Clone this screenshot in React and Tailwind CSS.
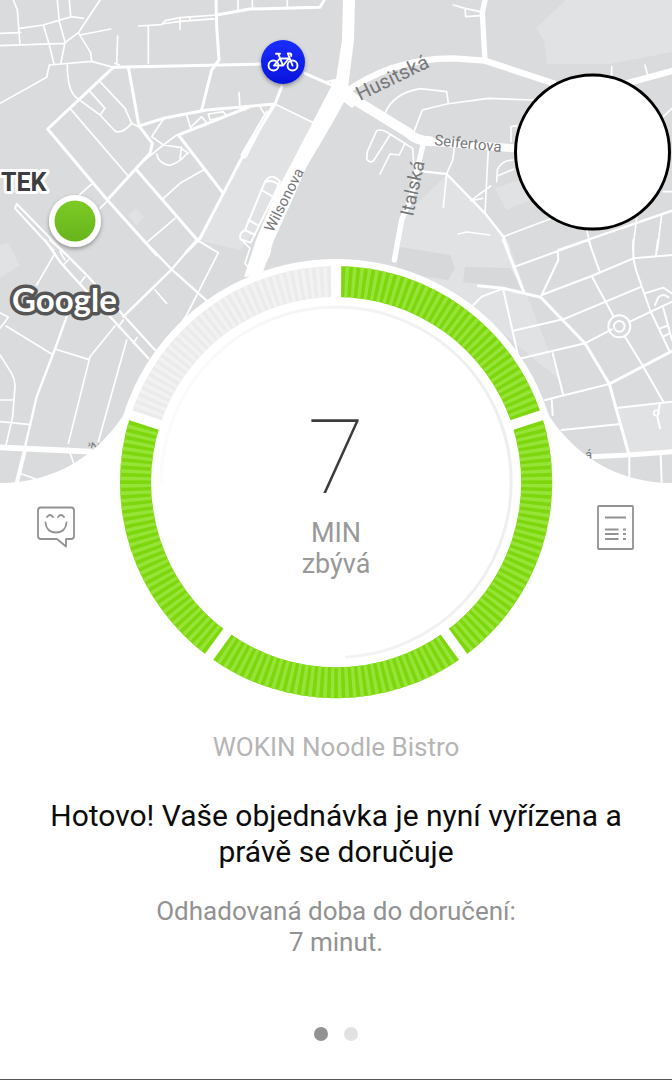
import React from "react";

function Roads() {
  return (
    <g fill="none" stroke="#fff" strokeLinejoin="round" strokeLinecap="round">
      <g transform="scale(0.33333)">
        <path
          strokeWidth="5"
          d="M0 100L62 98M0 137L195 130M40 0L52 30L60 135M60 85L130 75L215 50L250 55M172 0L178 65L195 125M208 0L212 50M300 0L235 98L195 128L182 192M130 75L148 135L162 192M240 105L332 87M235 98L272 158L275 183M148 195L275 184L340 202M148 195L140 232L0 310M202 195Q202 270 228 292L300 345L345 393Q365 404 395 370M353 108L350 190M345 190L358 195M300 245L375 325L395 370L415 380M268 272L315 325L300 345M210 325L382 525M445 78V190M415 78L485 74L495 62L540 53L650 45M485 72L540 64L650 56M540 52V88M570 50V62M714 0V30M757 0V25M862 0V22M490 358L455 410L490 435L540 442L565 460M560 345L572 385M572 382L605 350L620 368M625 342L670 335L680 348L630 360ZM717 278L720 325L735 330M825 312L940 368L995 265M780 320L792 340M470 462Q475 490 508 496Q535 492 562 460M545 442L540 475M530 405L490 435L410 500M610 510L540 550L490 595M525 655L440 728M240 583L280 548M590 718L640 750M300 625L325 600M980 245L1010 240"
        />
        <path
          strokeWidth="6"
          d="M800 335L724 465Q728 478 738 470L815 320M795 545Q815 515 840 545L820 590L752 728L722 718Q716 700 735 690ZM800 545Q815 538 835 553M785 570L815 588M745 660L775 676M735 690L765 705M45 625L50 612L60 622L185 750M45 625L160 750"
        />
        <path
          strokeWidth="9"
          d="M648 0L650 80L657 180L635 210L605 330M340 202L785 192M340 202L143 387L322 600L470 765M385 202L417 378L490 355L620 330L825 312M650 45L750 27L960 22L973 0M417 378L457 430L450 460L322 600M845 260L825 312L722 480L670 580L600 715L560 755M915 220L1005 260M535 405L670 580M408 508L590 718M750 320L535 405"
        />
      </g>

      <g transform="translate(330 0) scale(0.33333)">
        <path
          strokeWidth="5"
          d="M370 15L405 25L450 35M405 25L407 50L450 47M165 340Q190 280 270 266L350 275L355 310M250 400L277 330L350 312L475 295L610 300M150 522L180 462L208 465L225 430M180 405L130 483Q118 490 110 478L112 455L140 392Q155 385 180 402L248 445L252 500L285 515M373 445L368 480L350 522L340 622M475 445L465 640M422 602L482 558M422 602L458 595M385 702L410 696L480 705M500 545L502 510Q515 480 550 480M502 528L550 508M543 425V380L560 377M845 200V225M945 195L952 222M1000 350L1026 325M520 710L660 657M920 655L908 750M995 645L982 750M770 690L785 750M1000 575H1026"
        />
        <path
          strokeWidth="7"
          d="M285 515L350 522L465 640L520 710L535 750M685 750L1026 632"
        />
        <path strokeWidth="16" d="M465 0L457 40L465 182M280 430L240 600L215 660L193 780" />
        <path
          strokeWidth="19"
          d="M35 285Q180 175 370 175L465 182L670 250M890 250L1030 212"
        />
        <path strokeWidth="30" d="M30 272L235 398Q255 422 300 424" />
        <path strokeWidth="24" d="M280 424L570 446" />
      </g>

      <g transform="translate(0 240) scale(0.33333)">
        <path
          strokeWidth="5"
          d="M165 40L110 135M25 232L0 265M0 218L25 232M18 258L155 342M0 345L35 400Q46 420 45 440L38 530L18 615M0 480H42M0 545L92 554M165 327L265 358M345 258L270 350L205 610M205 625L222 672M380 300L295 605M590 0L655 38L560 225L515 290M465 150L500 190M370 230L515 88M65 702L105 716M195 60L180 35M190 75L205 60M240 130L255 110M355 260L370 240M400 310L412 292"
        />
        <path
          strokeWidth="7"
          d="M590 0L515 88L370 230M430 0L515 88L620 182M200 230L165 327L110 470L75 620M135 0L180 65L215 105L445 355M150 0L195 40L260 105L465 330"
        />
        <path strokeWidth="12" d="M75 630L50 730" />
        <path strokeWidth="17" d="M0 622L270 635" />
        <path strokeWidth="5" d="M725 0L750 25L735 70L770 110M800 0Q820 20 805 50L780 95" />
      </g>

      <g transform="translate(330 240) scale(0.33333)">
        <path
          strokeWidth="6"
          d="M555 80L775 0L808 92M635 165L685 60L683 35M635 165L785 108L910 55L1026 45M910 55V0M978 45L984 0M910 55L918 90L960 210L1018 333M785 108L850 228M705 236L935 140M550 272L705 236M520 150L565 350M430 195L455 170L520 145M575 355L765 310L845 268M668 340L700 466M645 480L838 432M665 480L668 525M695 570L865 553M865 503L1026 485M885 290L940 380L1000 485M900 245L1026 185M765 310L838 432M1000 205L1026 300M990 265L1010 258M1000 290L1018 280M945 160L1000 143L1026 160M975 195L985 172Q1000 158 1015 172M990 490L982 530L990 565M898 650V712M992 645L995 725"
        />
        <path
          strokeWidth="9"
          d="M520 0L582 158M445 137L520 145L632 172L765 310L838 432L895 638M838 432L1026 333"
        />
        <path strokeWidth="15" d="M780 650L895 645L1030 635" />
        <circle cx="868" cy="259" r="33" strokeWidth="6" />
        <circle cx="868" cy="259" r="16" strokeWidth="6" />
        <circle cx="979" cy="519" r="8" strokeWidth="5" />
      </g>

      <path
        fill="#fff"
        stroke="none"
        d="M343 0H355L354 40L348 88L362 98L352 108L344 102L333 122L306 168L290 205L274 240L262 275L244 277L256 240L277 190L290 166L313 122L332 85L330 80L336 79L342 40Z"
      />
    </g>
  );
}

function CityMap() {
  return (
    <svg viewBox="0 0 672 483" className="block h-auto w-full" role="img" aria-label="Mapa doručení">
      <defs>
        <linearGradient id="home" x1="0" y1="0" x2="0" y2="1">
          <stop offset="0" stopColor="#7dcb26" />
          <stop offset="1" stopColor="#67b41c" />
        </linearGradient>
        <linearGradient id="courier" x1="0" y1="0" x2="0" y2="1">
          <stop offset="0" stopColor="#1a2dff" />
          <stop offset="1" stopColor="#0415dc" />
        </linearGradient>
        <filter id="shadow" x="-30%" y="-30%" width="160%" height="160%">
          <feDropShadow dx="0" dy="2" stdDeviation="2" floodOpacity="0.35" />
        </filter>
      </defs>
      <rect width="672" height="483" fill="#dadbdd" />
      <g fill="#e1e2e4">
        <path d="M536 28L566 0H672V52L610 64L547 64L544 40Z" />
        <path d="M275 105L313 123L280 200L240 250L197 240L240 160Z" />
        <path d="M447 175L485 212L508 240L525 290L560 380L450 290L395 268L405 215Z" />
        <path d="M495 188L520 180L535 198L506 210ZM0 245L8 243L20 265L0 278ZM128 215L136 208L144 217L136 225Z" />
        <path d="M618 407L672 402V450L628 453Z" />
      </g>
      <path d="M400 247L450 255L455 268L448 280L395 272ZM465 267L510 268L524 290L463 282Z" fill="#d7d8da" />
      <Roads />

      <g fill="#77787b" fontFamily="Roboto, sans-serif">
        <text fontSize="20" transform="translate(360 101) rotate(-26)">Husitská</text>
        <text fontSize="15" transform="translate(434 145) rotate(6)">Seifertova</text>
        <text fontSize="19" transform="translate(413 217) rotate(-78)">Italská</text>
        <text fontSize="15" transform="translate(273 233) rotate(-63)">Wilsonova</text>
        <text fontSize="14" transform="translate(98 450) rotate(-78)">ž</text>
        <text fontSize="13" transform="translate(585 459)">á</text>
      </g>
      <text
        x="1"
        y="191"
        fontSize="25"
        fontWeight="700"
        fontFamily="Roboto, sans-serif"
        fill="#3c3d41"
        stroke="#fff"
        strokeWidth="6"
        strokeLinejoin="round"
        paintOrder="stroke"
      >
        TEK
      </text>

      <path
        d="M0 483C55 483 100 455 128 408A223 223 0 0 1 544 408C572 455 617 483 672 483Z"
        fill="#fff"
      />

      <g filter="url(#shadow)">
        <circle cx="75" cy="221" r="26" fill="#fff" />
      </g>
      <circle cx="75" cy="221" r="20.5" fill="url(#home)" />

      <circle cx="283" cy="62" r="22" fill="url(#courier)" filter="url(#shadow)" />
      <g fill="none" stroke="#fff" strokeWidth="1.9" strokeLinecap="round" strokeLinejoin="round">
        <circle cx="273.5" cy="65.5" r="5" />
        <circle cx="292.5" cy="65.5" r="5" />
        <path d="M276 53.8H280M278.3 54L283 65.5L289 58.5H279.8L274 65.5L283 65.5M292.5 65.5L287.8 53.5H290Q292 54 291 56" />
      </g>

      <text
        x="12"
        y="312"
        fontSize="33"
        fontWeight="700"
        fontFamily="Lato, sans-serif"
        fill="#fff"
        stroke="#555"
        strokeWidth="7"
        strokeLinejoin="round"
        paintOrder="stroke"
      >
        Google
      </text>

      <circle cx="592.5" cy="152" r="77" fill="#fff" stroke="#000" strokeWidth="3" />
    </svg>
  );
}

const INNER = 185;
const OUTER = 216;

function point(radius, degrees) {
  const a = (degrees * Math.PI) / 180;
  return `${(radius * Math.sin(a)).toFixed(2)} ${(-radius * Math.cos(a)).toFixed(2)}`;
}

function wedge(from, to) {
  return `M${point(OUTER, from)}A${OUTER} ${OUTER} 0 0 1 ${point(OUTER, to)}L${point(INNER, to)}A${INNER} ${INNER} 0 0 0 ${point(INNER, from)}Z`;
}

function stripes(start) {
  return Array.from({ length: 36 }, (_, i) => wedge(start + i * 2 + 0.5, start + i * 2 + 1.5)).join("");
}

const segments = [0, 72, 144, 216, 288].map((start) => ({
  start,
  base: start === 288 ? "#ebebeb" : "#7ed60d",
  light: start === 288 ? "#f2f2f2" : "#95e437",
}));

function Dial() {
  return (
    <div className="grid aspect-square w-full place-items-center rounded-full bg-white">
      <svg viewBox="-223 -223 446 446" className="col-start-1 row-start-1 w-full" aria-hidden="true">
        <defs>
          <linearGradient id="fade" x1="0" y1="0" x2="1" y2="0">
            <stop offset="0" stopColor="#fbfbfb" />
            <stop offset="0.5" stopColor="#f4f4f5" />
            <stop offset="1" stopColor="#eeeef0" />
          </linearGradient>
        </defs>
        {segments.map(({ start, base, light }) => (
          <g key={start}>
            <path d={wedge(start, start + 72)} fill={base} />
            <path d={stripes(start)} fill={light} />
          </g>
        ))}
        {segments.map(({ start }) => (
          <path key={start} d="M0 -180V-220" stroke="#fff" strokeWidth="10" transform={`rotate(${start})`} />
        ))}
        <path
          d="M-175 0A175 175 0 0 1 175 0A175 175 0 0 1 9 175"
          fill="none"
          stroke="url(#fade)"
          strokeWidth="3"
        />
      </svg>
      <div className="col-start-1 row-start-1 pt-[26px] text-center">
        <p className="text-[104px] leading-[96px] font-thin text-[#3c3c3e]">7</p>
        <p className="pt-3 text-[27px] leading-[31px] text-[#999]">
          MIN
          <br />
          zbývá
        </p>
      </div>
    </div>
  );
}

export default function App() {
  return (
    <main className="flex min-h-screen flex-col border-b border-[#555] bg-white font-[Roboto,sans-serif]">
      <CityMap />
      <div className="flex">
        <div className="flex flex-1 justify-center pt-5">
          <button type="button" aria-label="Ohodnotit" className="h-12 w-12 text-[#929292]">
            <svg
              viewBox="0 0 48 48"
              className="w-full"
              fill="none"
              stroke="currentColor"
              strokeWidth="1.8"
              strokeLinecap="round"
              strokeLinejoin="round"
            >
              <path d="M9 4.500H39Q42 4.500 42 7.500V33Q42 36 39 36H34V43.500L25 36H9Q6 36 6 33V7.500Q6 4.500 9 4.500Z" />
              <path d="M15 14Q18 10 21 14M26 14Q29 10 32 14M13.500 19.500Q14.500 29.500 24 29.500T34.500 19.500" />
            </svg>
          </button>
        </div>
        <div className="-mt-[33.300%] w-[66.400%] shrink-0">
          <Dial />
        </div>
        <div className="flex flex-1 justify-center pt-5">
          <button type="button" aria-label="Detail objednávky" className="h-12 w-12 text-[#929292]">
            <svg viewBox="0 0 48 48" className="w-full" fill="none" stroke="currentColor" strokeWidth="1.8">
              <rect x="6" y="3" width="35" height="43" rx="1" />
              <path d="M13 14.500H34M13 26.500H26.500M13 31H26.500M13 36H26.500M31 26.500H34M31 31H34M31 36H34" />
            </svg>
          </button>
        </div>
      </div>

      <section className="px-8 pt-[26px] text-center">
        <p className="text-[26px] leading-8 text-[#b5b5b5]">WOKIN Noodle Bistro</p>
        <h1 className="pt-[35px] text-[30px] leading-9 text-[#0c0c0c]">
          Hotovo! Vaše objednávka je nyní vyřízena a právě se doručuje
        </h1>
        <p className="pt-[26px] text-[26px] leading-[31px] text-[#929292]">
          Odhadovaná doba do doručení:
          <br />7 minut.
        </p>
      </section>

      <nav aria-label="Stránky" className="mt-auto flex justify-center gap-4 pb-[38px]">
        <button type="button" aria-label="Stránka 1" aria-current="page" className="size-3.5 rounded-full bg-[#929292]" />
        <button type="button" aria-label="Stránka 2" className="size-3.5 rounded-full bg-[#e2e2e2]" />
      </nav>
    </main>
  );
}
